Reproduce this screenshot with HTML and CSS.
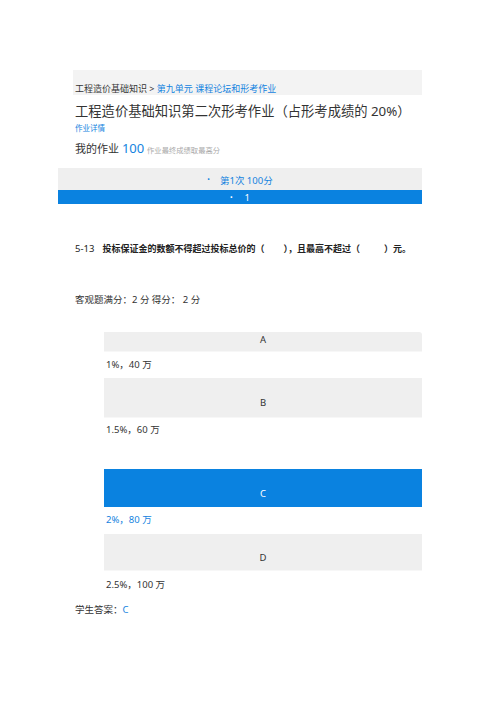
FILE: index.html
```html
<!DOCTYPE html>
<html lang="zh-CN">
<head>
<meta charset="utf-8">
<title>工程造价基础知识第二次形考作业</title>
<link rel="stylesheet" href="styles.css">
</head>
<body>
<div class="page">
  <div class="crumb">工程造价基础知识 &gt; <a class="link">第九单元</a> <a class="link">课程论坛和形考作业</a></div>
  <h1 class="title">工程造价基础知识第二次形考作业（占形考成绩的 20%）</h1>
  <div class="detail">作业详情</div>
  <div class="my">我的作业 <span class="score">100</span> <span class="note">作业最终成绩取最高分</span></div>
  <div class="tab-gray"><span class="dot">•</span><span class="tab-text">第1次 100分</span></div>
  <div class="tab-blue"><span class="dot">•</span><span class="tab-text">1</span></div>

  <div class="question"><span class="qno">5-13</span><span class="qtext">投标保证金的数额不得超过投标总价的（<span class="blank"></span>），且最高不超过（<span class="blank wide"></span>）元。</span></div>
  <div class="points">客观题满分：2 分 得分： 2 分</div>

  <div class="options">
    <div class="opt opt-a">A</div>
    <div class="opt-text">1%，40 万</div>
    <div class="opt opt-b">B</div>
    <div class="opt-text">1.5%，60 万</div>
    <div class="opt opt-c selected">C</div>
    <div class="opt-text chosen">2%，80 万</div>
    <div class="opt opt-d">D</div>
    <div class="opt-text">2.5%，100 万</div>
  </div>

  <div class="answer">学生答案：<span class="link">C</span></div>
</div>
</body>
</html>
```

FILE: styles.css
```css
html, body {
  margin: 0;
  padding: 0;
  background: #ffffff;
}

body {
  font-family: "Noto Sans", "Noto Sans CJK SC", sans-serif;
  color: #333333;
}

.page {
  margin-left: 58px;
  width: 364px;
  padding-top: 70px;
  padding-bottom: 40px;
}

.link {
  color: #1483e0;
}

.crumb {
  margin-left: 15px;
  height: 25px;
  box-sizing: border-box;
  padding: 13px 0 0 2px;
  background: #f3f3f3;
  font-size: 9px;
  line-height: 12px;
  color: #333;
  white-space: nowrap;
}

.title {
  margin: 6px 0 0 17px;
  font-size: 13.3px;
  line-height: 20px;
  font-weight: normal;
  color: #333;
  white-space: nowrap;
}

.detail {
  margin: 2px 0 0 17px;
  font-size: 7.5px;
  line-height: 10px;
  color: #1483e0;
}

.my {
  margin: 6px 0 0 17px;
  font-size: 11px;
  line-height: 18px;
  white-space: nowrap;
}

.score {
  color: #1483e0;
  font-size: 13px;
}

.note {
  color: #aaaaaa;
  font-size: 7.3px;
}

.tab-gray {
  margin-top: 9px;
  height: 22px;
  background: #efefef;
  display: flex;
  justify-content: center;
  align-items: center;
  font-size: 9.5px;
  color: #1483e0;
  padding-top: 1px;
  box-sizing: border-box;
}

.tab-blue {
  height: 14px;
  background: #0a82e0;
  display: flex;
  justify-content: center;
  align-items: center;
  font-size: 9.5px;
  color: #ffffff;
  padding-top: 1px;
  box-sizing: border-box;
}

.dot {
  font-size: 7px;
  margin-right: 10px;
}

.tab-blue .dot {
  margin-right: 12px;
}

.question {
  margin: 38px 0 0 17px;
  font-size: 9px;
  line-height: 14px;
  white-space: nowrap;
  color: #222;
}

.qno {
  font-size: 9.5px;
  margin-right: 8px;
}

.qtext {
  font-weight: bold;
}

.blank {
  display: inline-block;
  width: 19px;
}

.blank.wide {
  width: 24px;
}

.points {
  margin: 37px 0 0 17px;
  font-size: 9.5px;
  line-height: 14px;
}

.options {
  margin: 25px 0 0 46px;
  width: 318px;
}

.opt {
  background: #efefef;
  text-align: center;
  font-size: 9.5px;
  line-height: 12px;
  box-sizing: border-box;
  color: #333;
  box-shadow: 0 1px 0 #f7f7f7;
}

.opt-a {
  height: 19px;
  padding-top: 2px;
  border-top-right-radius: 3px;
}

.opt-b {
  margin-top: 6px;
  height: 39px;
  padding-top: 19px;
}

.opt-c {
  margin-top: 32px;
  height: 38px;
  padding-top: 19px;
}

.opt-d {
  margin-top: 7px;
  height: 36px;
  padding-top: 18px;
}

.selected {
  background: #0a82e0;
  color: #ffffff;
  box-shadow: none;
}

.opt-text {
  margin-top: 7px;
  padding-left: 2px;
  font-size: 9.5px;
  line-height: 14px;
}

.opt-b + .opt-text,
.opt-c + .opt-text {
  margin-top: 6px;
}

.opt-d + .opt-text {
  margin-top: 8px;
}

.chosen {
  color: #1483e0;
}

.answer {
  margin: 11px 0 0 17px;
  font-size: 9.5px;
  line-height: 14px;
}
```
